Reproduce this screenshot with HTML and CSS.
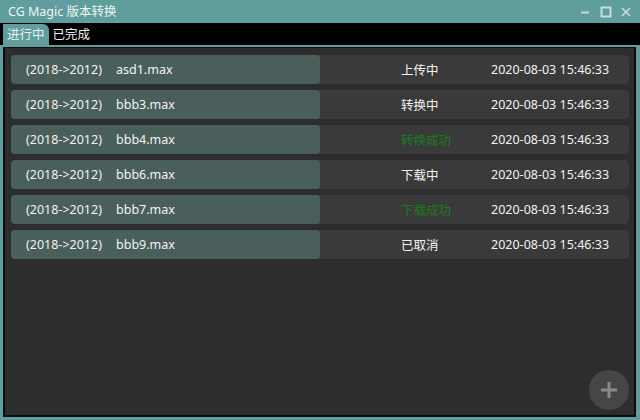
FILE: index.html
```html
<!DOCTYPE html>
<html>
<head>
<meta charset="utf-8">
<link rel="stylesheet" href="styles.css">
</head>
<body>
<div class="window">
  <div class="titlebar">
    <div class="title">CG Magic 版本转换</div>
    <div class="controls">
      <svg class="ctl" width="12" height="12" viewBox="0 0 12 12"><line x1="1" y1="6.5" x2="9" y2="6.5" stroke="#c9dcdb" stroke-width="2"/></svg>
      <svg class="ctl" width="12" height="12" viewBox="0 0 12 12"><rect x="1.5" y="1.5" width="9" height="9" fill="none" stroke="#c9dcdb" stroke-width="2"/></svg>
      <svg class="ctl" width="12" height="12" viewBox="0 0 12 12"><path d="M2 2 L10 10 M10 2 L2 10" stroke="#c9dcdb" stroke-width="1.6"/></svg>
    </div>
  </div>
  <div class="tabs">
    <div class="tab active">进行中</div>
    <div class="tab">已完成</div>
  </div>
  <div class="content">
    <div class="row"><div class="name"><span class="ver">(2018-&gt;2012)</span><span>asd1.max</span></div><div class="status">上传中</div><div class="date">2020-08-03 15:46:33</div></div>
    <div class="row"><div class="name"><span class="ver">(2018-&gt;2012)</span><span>bbb3.max</span></div><div class="status">转换中</div><div class="date">2020-08-03 15:46:33</div></div>
    <div class="row"><div class="name"><span class="ver">(2018-&gt;2012)</span><span>bbb4.max</span></div><div class="status ok">转换成功</div><div class="date">2020-08-03 15:46:33</div></div>
    <div class="row"><div class="name"><span class="ver">(2018-&gt;2012)</span><span>bbb6.max</span></div><div class="status">下载中</div><div class="date">2020-08-03 15:46:33</div></div>
    <div class="row"><div class="name"><span class="ver">(2018-&gt;2012)</span><span>bbb7.max</span></div><div class="status ok">下载成功</div><div class="date">2020-08-03 15:46:33</div></div>
    <div class="row"><div class="name"><span class="ver">(2018-&gt;2012)</span><span>bbb9.max</span></div><div class="status">已取消</div><div class="date">2020-08-03 15:46:33</div></div>
    <div class="add">
      <svg width="20" height="20" viewBox="0 0 20 20"><path d="M10 2 V18 M2 10 H18" stroke="#8a8a8a" stroke-width="3"/></svg>
    </div>
  </div>
</div>
</body>
</html>
```
FILE: styles.css
```css
html, body {
  margin: 0;
  padding: 0;
}
body {
  width: 640px;
  height: 420px;
  overflow: hidden;
  font-family: "Noto Sans", "Noto Sans CJK SC", sans-serif;
  font-size: 12.5px;
  color: #f2f2f2;
}
.window {
  width: 640px;
  height: 420px;
  box-sizing: border-box;
  background: #5f9e9c;
  padding: 0 4px 3px 3px;
  display: flex;
  flex-direction: column;
}
.titlebar {
  height: 23px;
  display: flex;
  align-items: center;
  justify-content: space-between;
  padding-left: 5px;
}
.title {
  color: #eef5f4;
  font-size: 12.5px;
  line-height: 23px;
}
.controls {
  display: flex;
  gap: 8px;
  align-items: center;
  padding-right: 4px;
}
.tabs {
  height: 22px;
  background: #000;
  margin: 0 -4px 0 -3px;
  padding-left: 3px;
  display: flex;
  align-items: flex-end;
}
.tab {
  height: 21px;
  line-height: 21px;
  padding: 0 4px;
  color: #f2f2f2;
  font-size: 12.5px;
}
.tab.active {
  background: #5f9e9c;
  color: #e8f2f1;
  border-top-right-radius: 6px;
}
.content {
  flex: 1;
  position: relative;
  margin-top: 2px;
  background: #2d2d2d;
  border: 2px solid #0c0c0c;
  border-top: 1px solid #0c0c0c;
  padding: 7px 5px 0 6px;
  display: flex;
  flex-direction: column;
  gap: 6px;
}
.row {
  height: 29px;
  background: #3a3a3a;
  border-radius: 4px;
  display: flex;
  align-items: center;
}
.name {
  width: 294px;
  height: 100%;
  background: #4a5e5b;
  border-radius: 4px;
  padding-left: 15px;
  display: flex;
  align-items: center;
  flex-shrink: 0;
}
.ver {
  width: 90px;
  flex-shrink: 0;
}
.status {
  margin-left: 81px;
  width: 90px;
  flex-shrink: 0;
}
.status.ok {
  color: #1a7d1a;
}
.date {
  flex-shrink: 0;
}
.add {
  position: absolute;
  right: 5px;
  bottom: 5px;
  width: 40px;
  height: 40px;
  border-radius: 50%;
  background: #464646;
  display: flex;
  align-items: center;
  justify-content: center;
}
```
